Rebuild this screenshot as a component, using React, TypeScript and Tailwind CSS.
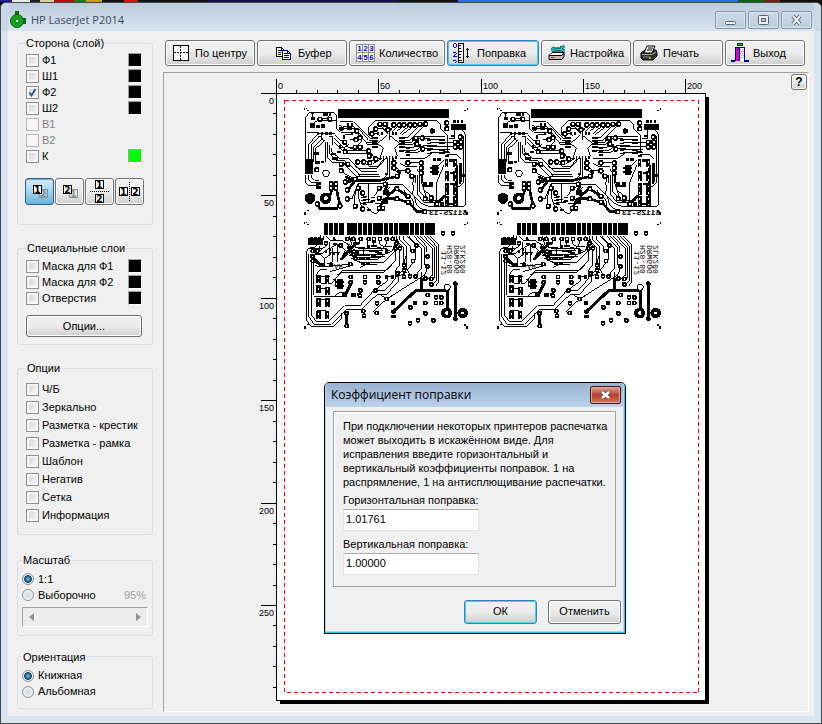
import type { ReactNode } from "react";

type Pt = [number, number];
type Box = [number, number, number, number];

function Ring({ at, r = 6 }: { at: Pt; r?: number }) {
  return <circle cx={at[0]} cy={at[1]} r={r} fill="white" stroke="black" strokeWidth="5" />;
}

function Rects({ items }: { items: Box[] }) {
  return (
    <g fill="black">
      {items.map(([x, y, w, h], i) => (
        <rect key={i} x={x} y={y} width={w} height={h} />
      ))}
    </g>
  );
}

const cornerMarks: Box[] = [
  [42, 0, 3, 6], [48, 0, 3, 3], [51, 5, 6, 5], [522, 5, 6, 5], [531, 0, 3, 6],
  [42, 312, 6, 9], [51, 306, 6, 4], [522, 306, 6, 5], [528, 312, 6, 9],
];

const upperTraces = [
  "M48 195V66L58 52H130L140 62V100L152 112H200L235 150H262",
  "M48 240V265L58 272H88M57 240V256L66 263H88M66 240V248L74 256H88",
  "M57 192V146L84 118M64 192V150L90 124M71 200V156L98 130M78 208V160L104 136",
  "M50 112H84M68 66V52H78M90 72H110L120 60M60 92L80 78H140",
  "M84 116H136M84 126H96M118 126H128V150M96 118V132L106 140V200",
  "M112 140V186L130 204H160L200 246H270M118 150V176L140 198H166L208 238H266M124 158V170L148 190H174L214 230H262",
  "M130 140L166 176H240L258 190H270M132 130L172 168H232L250 180M134 120L180 160H210",
  "M146 88L160 100H206L236 136H262M150 80H190L214 104L240 130H262M160 94H190L206 110V122L232 144H262M166 120H190",
  "M196 106L214 120V140L196 158H180M180 134H200M150 158H164L176 148",
  "M236 120V96L256 76H440L452 88V100L474 124V170H460",
  "M270 90L288 108M292 90V116M314 90L300 108V136M328 90L306 112M342 90L322 108M360 90L330 116M374 90L336 120M392 88L352 128H334M408 86L356 138H334",
  "M258 102H280L292 116M246 116H262L270 122",
  "M262 146L280 158M330 146L314 158M262 146L290 122M300 122L330 146M280 158L272 182M314 158L322 182",
  "M334 144H362L380 126H410M334 150H364L388 130H420M334 158H370L384 148M340 166H376L400 152H440M344 174H380L398 162H430M330 192H402L430 172H462",
  "M420 124H462M420 134H462M420 144H480M420 154H480M420 164H480M420 174H480",
  "M300 188V240L286 262M294 188V236L276 254H180M308 188V220L322 230M288 190L266 214H240L226 206M282 190L258 222H208L196 214M276 190L250 206",
  "M270 190L240 200H200M300 200V230M312 190V212L330 228H344L360 240",
  "M162 236L180 244L200 254H270M160 206H176L214 246",
  "M330 206L346 214H380M346 224L370 242V262M354 204H398M380 222L394 240V262L410 310",
  "M384 240V300L404 324H462M390 240V290L412 318H460M400 262V284L420 300V324",
  "M366 262L372 280L366 296L392 324L420 336H520L528 328V120L516 104",
  "M470 84V102M494 90V130M506 126H522V262L506 276H494M478 130H496M478 142H496M478 154H496",
  "M462 194L430 228V240M462 210L440 262V320M470 180L500 180L512 192",
  "M170 312H186L204 266H280L286 272M206 268V310L218 344M236 268V320M220 306H232M220 314H240M220 322H244L256 314M220 330H232M240 320H256",
  "M254 302L270 280L290 270H340L372 302L380 330L400 346H490M232 336L246 352L258 356L266 350L270 336",
  "M286 290L300 276M256 326H280L296 310M206 284L196 290L192 330M340 284L372 320V336",
];

const lowerTraces = [
  "M50 110L56 100H96M50 110V318L66 336H130L154 312V294M57 116V306L72 328H124L146 306L168 284H214L262 238H290L326 198V176L342 162",
  "M64 122V300L80 320H116L140 296L164 272H210L250 228H282L318 190V164L330 150V100L318 62",
  "M72 126V240M72 246H164M92 206H124L152 174H280L318 136V104",
  "M74 150L90 156L180 148M110 164H90L78 180M120 170L190 150M140 182L156 168H286L306 150",
  "M92 60V80L72 98H60M108 62L124 78H160L190 104M120 80V96L98 116H76M128 100V140L110 148M116 112H150M142 88V140",
  "M60 108H88L110 92M60 118H90L104 130V148M70 126L96 150M150 90L166 106L150 136M160 80L190 96",
  "M178 62L186 90L206 100H290M190 62L200 84M210 66V86M232 66V92M250 66V90L270 100M268 66V86L284 96H306M290 66V86L274 104M308 64L318 80L306 108L280 120H200",
  "M190 108H280M190 118H250L260 126H286M196 128H270L300 104M180 104V116L196 134H262L280 120M206 142H282L322 100M180 96L206 112M220 100V120M236 110H266M178 122H240M184 130L220 146",
  "M320 62V78L342 100V150M330 62V76L350 96V164L362 180M340 62V74L362 94V106M350 62L378 90V130L352 166M360 62V70L394 100V160L374 184M370 62L404 98V150L416 154",
  "M380 62L410 94V112M390 62L428 102V180L412 192M400 62L434 98V186L424 192M410 62L440 94V196L426 208M420 62L446 90V202L436 214M350 116L340 150M396 170V200",
  "M415 154L404 180L290 252L270 238M290 252L250 290M306 186L292 186V198L256 224V228M262 150H226L210 158",
  "M130 66L140 76M100 62V76M104 130L120 120V100L138 90M88 92V104M350 172L318 186",
  "M80 186H120M80 220H108M80 254H108M80 288H108M128 196L138 190V216M132 246L148 232H166",
];

const upperPads: Pt[] = [
  [470, 84], [470, 101], [270, 88], [286, 88], [312, 90], [328, 90], [342, 90], [360, 90], [374, 90], [390, 88], [407, 87],
  [257, 102], [246, 117], [294, 104], [200, 108], [198, 134], [164, 142], [210, 128], [196, 157], [211, 157], [90, 73], [119, 73],
  [236, 168], [238, 184], [257, 192], [166, 170], [203, 201], [221, 201], [239, 203], [154, 208], [173, 208], [154, 227],
  [312, 204], [312, 219], [354, 204], [394, 204], [394, 220], [354, 228], [366, 244], [394, 234], [80, 224], [378, 130], [397, 129],
  [380, 147], [398, 162], [124, 266], [137, 266], [124, 280], [137, 280], [166, 261], [196, 253], [172, 285], [205, 280],
  [218, 294], [172, 312], [196, 334], [218, 342], [268, 280], [286, 268], [268, 310], [320, 281], [320, 311], [354, 304],
  [355, 322], [406, 311], [424, 308], [404, 350], [82, 327], [150, 333], [496, 142], [511, 126], [496, 156], [512, 142],
  [512, 156], [440, 326], [322, 244], [268, 340], [278, 340],
];

const lowerPads: Pt[] = [
  [459, 55], [489, 55], [379, 91], [368, 108], [369, 138], [413, 124], [412, 154], [342, 151], [342, 166], [323, 175],
  [342, 185], [360, 184], [377, 184], [406, 191], [424, 192], [424, 208], [182, 186], [182, 202], [225, 186], [225, 202],
  [265, 186], [265, 202], [256, 227], [211, 226], [210, 242], [290, 252], [261, 265], [220, 288], [222, 302], [260, 294],
  [170, 295], [170, 333], [406, 264], [406, 295], [361, 277], [360, 325], [384, 316], [430, 316], [413, 240], [438, 247],
  [454, 247], [438, 264], [454, 264], [181, 147], [172, 72], [190, 72], [212, 72], [236, 72], [252, 72], [270, 72], [290, 72],
  [308, 72], [108, 85], [152, 91], [68, 108], [82, 108], [68, 124], [68, 138], [320, 85], [316, 100], [330, 100], [190, 118], [196, 130],
];

const upperBlocks: Box[] = [
  [144, 2, 333, 28], [45, 153, 24, 46], [60, 45, 16, 15], [92, 48, 14, 12], [78, 52, 12, 8], [116, 16, 8, 8], [62, 12, 10, 6],
  [80, 72, 8, 8], [92, 72, 8, 8], [106, 72, 8, 8], [118, 72, 8, 8], [100, 14, 14, 10], [62, 28, 14, 8],
  [148, 56, 14, 10], [170, 44, 8, 12], [182, 44, 6, 12], [170, 58, 16, 8], [72, 132, 14, 8], [76, 160, 14, 8], [94, 158, 8, 8],
  [78, 222, 8, 8], [88, 222, 6, 8], [78, 234, 8, 8], [88, 234, 6, 8], [124, 136, 14, 6], [126, 148, 18, 8],
  [140, 128, 14, 8], [146, 112, 8, 10], [158, 82, 8, 10], [182, 72, 6, 8], [190, 92, 8, 8], [180, 116, 10, 8],
  [246, 88, 18, 4], [246, 97, 18, 4], [246, 106, 18, 4], [246, 115, 18, 4], [262, 73, 6, 8], [272, 73, 6, 8], [306, 73, 6, 8], [316, 73, 6, 8],
  [328, 88, 16, 4], [328, 97, 16, 4], [328, 106, 16, 4], [328, 115, 16, 4], [270, 144, 4, 10], [279, 144, 4, 10], [288, 144, 4, 10],
  [297, 144, 4, 10], [306, 144, 4, 10], [316, 144, 4, 10], [328, 126, 14, 7], [348, 118, 12, 6], [348, 128, 12, 6], [348, 138, 12, 6],
  [366, 90, 8, 10], [380, 90, 8, 12], [384, 108, 8, 8], [412, 84, 12, 4], [412, 94, 12, 4], [412, 104, 12, 4], [412, 114, 12, 4], [412, 124, 12, 4], [412, 134, 12, 4],
  [448, 84, 16, 4], [448, 94, 16, 4], [448, 104, 16, 4], [448, 114, 16, 4], [448, 124, 16, 4], [448, 134, 16, 4], [464, 128, 12, 8], [464, 140, 12, 8],
  [484, 48, 44, 17], [489, 36, 8, 9], [501, 36, 7, 9], [512, 36, 8, 9], [484, 80, 12, 8],
  [428, 150, 10, 8], [442, 150, 10, 8], [425, 172, 18, 30], [420, 178, 28, 6], [420, 190, 28, 6],
  [320, 186, 8, 8], [324, 190, 10, 8], [285, 194, 8, 8], [374, 200, 4, 26], [380, 200, 4, 26], [392, 202, 6, 22],
  [464, 152, 11, 26], [464, 190, 13, 30], [464, 226, 13, 34], [464, 264, 13, 30], [490, 152, 11, 26], [490, 190, 13, 30],
  [490, 226, 13, 34], [490, 264, 13, 30], [478, 154, 10, 8], [480, 192, 10, 6], [480, 226, 10, 6], [478, 284, 10, 6],
  [402, 222, 10, 8], [416, 222, 12, 8], [402, 232, 26, 6], [420, 262, 10, 12], [420, 278, 10, 8], [438, 282, 10, 8], [450, 286, 12, 10],
  [280, 246, 16, 14], [278, 274, 16, 14], [240, 282, 10, 4], [212, 268, 16, 3], [212, 276, 16, 3], [212, 284, 16, 3], [242, 268, 14, 3], [242, 276, 14, 3],
  [262, 298, 10, 8], [276, 298, 10, 8], [232, 302, 10, 6], [342, 278, 8, 8], [508, 198, 5, 30], [516, 198, 8, 8],
];

const lowerBlocks: Box[] = [
  [102, 3, 12, 36], [117, 3, 12, 36], [132, 3, 12, 36], [147, 3, 14, 36], [171, 3, 30, 36], [204, 3, 12, 36], [219, 3, 12, 36],
  [234, 3, 12, 36], [249, 3, 29, 36], [281, 3, 12, 36], [296, 3, 12, 36], [311, 3, 12, 36], [327, 3, 30, 36], [360, 3, 12, 36],
  [375, 3, 11, 36], [389, 3, 12, 36], [404, 3, 31, 36], [54, 48, 45, 20], [60, 44, 8, 4], [72, 44, 8, 4], [84, 44, 10, 4],
  [128, 46, 8, 8], [130, 62, 10, 8], [90, 122, 14, 12], [116, 122, 14, 12], [98, 74, 8, 4], [116, 78, 6, 8], [104, 84, 8, 10],
  [116, 92, 6, 8], [128, 92, 6, 8], [142, 90, 6, 8], [190, 60, 18, 8], [196, 74, 28, 5], [230, 70, 10, 8], [244, 70, 16, 4],
  [170, 72, 12, 10], [176, 84, 14, 10], [196, 88, 10, 8], [206, 104, 18, 10], [228, 104, 12, 10], [242, 98, 16, 8], [262, 90, 14, 6],
  [214, 122, 10, 8], [228, 122, 12, 8], [246, 56, 12, 8], [264, 74, 10, 6], [284, 80, 10, 12], [256, 84, 8, 8],
  [285, 160, 9, 10], [302, 160, 9, 10], [140, 172, 18, 28], [136, 176, 26, 6], [136, 190, 26, 6],
  [78, 160, 14, 24], [106, 160, 12, 24], [78, 190, 14, 24], [106, 194, 14, 24], [78, 228, 14, 28], [106, 228, 14, 28],
  [78, 266, 14, 26], [106, 266, 12, 26], [156, 214, 14, 12], [184, 214, 14, 12], [200, 214, 12, 8], [304, 238, 12, 10], [368, 238, 12, 10],
  [304, 266, 14, 8], [304, 280, 14, 8], [250, 202, 14, 8], [302, 222, 4, 4],
];

function Board() {
  return (
    <g fill="none" stroke="black" strokeWidth="3">
      <g>
        {upperTraces.map((d) => <path key={d} d={d} />)}
        <path
          strokeWidth="8"
          d="M110 325L128 280V268M140 286L146 312L150 330M78 326L90 340H144M166 245L190 256H270L322 244M166 262L196 256L174 284M286 310L316 311L356 322L382 350H404M290 304L320 281L354 304M290 272L282 300M440 326L468 300M268 338L284 310M500 210V320M512 204V260"
        />
        <g transform="translate(0 39)" stroke="none">
          <Rects items={upperBlocks} />
          <Rects items={cornerMarks} />
        </g>
        {upperPads.map((p, i) => <Ring key={i} at={p} />)}
        <circle cx="108" cy="235" r="10" fill="white" />
        <circle cx="60" cy="310" r="15" fill="black" />
        <circle cx="107" cy="310" r="12" fill="white" strokeWidth="11" />
        <circle cx="427" cy="108" r="7" fill="black" />
        <circle cx="154" cy="102" r="5" fill="black" />
        <g fill="white" stroke="none">
          {[198, 214, 234, 252, 272, 292, 310, 326].map((y) => (
            <path key={y} d={`M468 ${y}h4v5h-4zM494 ${y}h4v5h-4z`} />
          ))}
        </g>
        <text x="-532" y="359" transform="scale(-1 1)" fill="black" stroke="none" className="font-['Liberation_Mono'] text-[24px] font-bold">6112S-13</text>
      </g>
      <g transform="translate(0 360)">
        {lowerTraces.map((d) => <path key={d} d={d} />)}
        <path
          strokeWidth="9"
          d="M310 290L378 226H472V280M396 190V226M496 206V310M170 296V332M184 204L166 240M72 134L92 150M152 134L180 104L196 88"
        />
        <g transform="translate(0 21)" stroke="none">
          <Rects items={lowerBlocks} />
          <Rects items={cornerMarks} />
        </g>
        {lowerPads.map((p, i) => <Ring key={i} at={p} r={5} />)}
        <circle cx="472" cy="217" r="9" fill="white" />
        <circle cx="470" cy="294" r="11" fill="white" strokeWidth="11" />
        <circle cx="518" cy="294" r="10" fill="white" strokeWidth="12" />
        <g fill="black">
          <circle cx="496" cy="206" r="6" />
          <circle cx="496" cy="311" r="6" />
          <circle cx="310" cy="291" r="6" />
        </g>
        <g fill="white" stroke="none">
          {[188, 202, 220, 234, 256, 272, 294, 308].map((y) => (
            <path key={y} d={`M84 ${y}h4v5h-4zM111 ${y}h4v5h-4z`} />
          ))}
        </g>
        <g fill="black" stroke="none" className="font-['Liberation_Mono']">
          <text x="132" y="163" className="text-[22px]">VH</text>
          <g transform="matrix(0 1 1 0 0 0)" className="text-[24px]">
            <text x="108" y="467">11-12</text>
            <text x="90" y="487">H28-80</text>
            <text x="90" y="507">DRWGQG</text>
            <text x="90" y="526">2LK200</text>
          </g>
        </g>
      </g>
    </g>
  );
}

function PaperPreview() {
  const tens = Array.from({ length: 21 }, (_, i) => i);
  const rows = Array.from({ length: 30 }, (_, i) => i);
  return (
    <svg
      viewBox="256 78 460 630"
      width="460"
      height="630"
      shapeRendering="crispEdges"
      role="img"
      aria-label="Предпросмотр печати"
      className="font-['Liberation_Sans',sans-serif] text-[9px]"
    >
      <path d="M280 97H709V704H280Z" />
      <path d="M276 93H706V701H276Z" />
      <path d="M277 94H705V700H277Z" fill="white" />
      <path d="M261 93h16v1h-16zM276 79h1v15h-1z" />
      {tens.map((i) => {
        const x = 276 + Math.round(i * 20.45);
        const major = i % 5 === 0;
        return (
          <g key={i}>
            <rect x={x} y={major ? 79 : 90} width="1" height={major ? 14 : 3} />
            {major && <text x={x + 2} y="89">{i * 10}</text>}
          </g>
        );
      })}
      {rows.map((i) => {
        const y = 93 + Math.round(i * 20.48);
        const major = i % 5 === 0;
        return (
          <g key={i}>
            <rect x={major ? 261 : 273} y={y} width={major ? 15 : 3} height="1" />
            {major && <text x="274" y={y + 11} textAnchor="end">{i * 10}</text>}
          </g>
        );
      })}
      <rect x="284.5" y="100.5" width="414" height="592" fill="none" stroke="#ff0000" strokeDasharray="4 3" />
      <g transform="translate(290 95) scale(0.33333)"><Board /></g>
      <g transform="translate(483 95) scale(0.33333)"><Board /></g>
    </svg>
  );
}

function CheckRow({ label, checked, disabled, swatch, tall }: { label: string; checked?: boolean; disabled?: boolean; swatch?: "black" | "lime"; tall?: boolean }) {
  return (
    <div className={`flex items-center justify-between ${tall ? "h-[18px]" : "h-4"}`}>
      <label className={`flex items-center gap-[3px] whitespace-nowrap ${disabled ? "text-[#838383]" : ""}`}>
        <span className="relative flex">
          <input
            type="checkbox"
            defaultChecked={checked}
            disabled={disabled}
            className="peer size-[13px] appearance-none border border-[#8e8f8f] bg-linear-to-br from-[#cfd3d9] to-[#f8f8f8] shadow-[inset_0_0_0_2px_#f6f6f6] disabled:border-[#b8b8b8] disabled:from-[#f6f6f6]"
          />
          <svg viewBox="0 0 13 13" className="pointer-events-none absolute inset-0 hidden size-[13px] peer-checked:block">
            <path d="M3.5 6.5L5.5 9.5L9.5 3" fill="none" stroke="#3f51a0" strokeWidth="2" />
          </svg>
        </span>
        {label}
      </label>
      {swatch && (
        <span className={`size-[14px] border border-t-[#a0a0a0] border-r-white border-b-white border-l-[#a0a0a0] ${swatch === "lime" ? "bg-[#00ff00]" : "bg-black"}`} />
      )}
    </div>
  );
}

function RadioRow({ name, label, checked }: { name: string; label: string; checked?: boolean }) {
  return (
    <label className="flex h-4 items-center gap-1 whitespace-nowrap">
      <input
        type="radio"
        name={name}
        defaultChecked={checked}
        className="size-3 appearance-none rounded-full border border-[#8e8f8f] bg-radial from-[#d4d8de] to-[#f8f8f8] shadow-[inset_0_0_0_1px_#f4f4f4] checked:bg-radial checked:from-[#4fb8e8] checked:from-10% checked:via-[#123a5c] checked:via-50% checked:to-[#dfe6ec] checked:to-60%"
      />
      {label}
    </label>
  );
}

function Group({ title, className, children }: { title: string; className: string; children: ReactNode }) {
  return (
    <fieldset className={`min-w-0 rounded-[3px] border border-[#d5dfe5] ${className}`}>
      <legend className="px-px leading-[14px]">{title}</legend>
      {children}
    </fieldset>
  );
}

const face = "rounded-[3px] border border-[#707070] bg-linear-to-b from-[#f2f2f2] from-0% via-[#ebebeb] via-50% to-[#cfcfcf] shadow-[inset_0_0_0_1px_#fcfcfc]";
const focused = "rounded-[3px] border border-[#3c7fb1] bg-linear-to-b from-[#f2f2f2] from-0% via-[#ebebeb] via-50% to-[#cfcfcf] shadow-[inset_0_0_0_1px_#48d0f4]";

function ToolButton({ label, width, icon, active }: { label: string; width: string; icon: ReactNode; active?: boolean }) {
  return (
    <button type="button" className={`flex h-[26px] shrink-0 items-center whitespace-nowrap ${width} ${active ? focused : face}`}>
      {icon}
      {label}
    </button>
  );
}

function CenterIcon() {
  return (
    <svg width="16" height="16" className="mr-1.5 ml-[7px]" shapeRendering="crispEdges">
      <rect x="0.5" y="0.5" width="15" height="15" fill="white" stroke="black" />
      <path d="M7.5 1V15M1 7.5H15" stroke="black" strokeDasharray="2 1" />
    </svg>
  );
}

function CopyIcon() {
  return (
    <svg width="17" height="15" className="mr-1.5 ml-[17px]" shapeRendering="crispEdges">
      <path d="M1.5 1.5H6.5L9.5 4.5V10.5H1.5Z" fill="white" stroke="black" />
      <path d="M3 4.5H6M3 6.5H6M3 8.5H6M6.5 2V4.5H9" fill="none" stroke="black" />
      <path d="M7.5 4.5H12.5L15.5 7.5V13.5H7.5Z" fill="white" stroke="#000080" />
      <path d="M9 7.5H12M9 9.5H14M9 11.5H14M12.5 5V7.5H15" fill="none" stroke="#000080" />
    </svg>
  );
}

function CountIcon() {
  return (
    <svg width="19" height="18" className="mr-1 ml-1.5" shapeRendering="crispEdges">
      <path d="M0.5 0.5H18.5V17.5H0.5ZM6.5 0V18M12.5 0V18M0 8.5H19" fill="white" stroke="#909090" />
      <g fill="#0000e0" textAnchor="middle" className="font-['Liberation_Sans',sans-serif] text-[8px] font-bold">
        <text x="3.5" y="7">1</text><text x="9.5" y="7">2</text><text x="15.5" y="7">3</text>
        <text x="3.5" y="16">4</text><text x="9.5" y="16">5</text><text x="15.5" y="16">6</text>
      </g>
    </svg>
  );
}

function RulerIcon() {
  return (
    <svg width="18" height="20" className="mr-1.5 ml-[5px]" shapeRendering="crispEdges">
      <g fill="none" stroke="#0000e0">
        <path d="M1 0.5H3M0.5 1V4M3.5 1V4M1 4.5H3" />
        <path d="M0 9.5H3M3.5 10V11M2 11.5H3M1 12.5H2M0 13.5H4M0 17.5H3M3.5 18V19M2 19.5H3" />
      </g>
      <rect x="5.5" y="0.5" width="5" height="19" fill="white" stroke="black" />
      <path d="M6 2.5H8M6 5.5H8M6 8.5H9M6 11.5H8M6 14.5H8M6 17.5H9" stroke="black" />
      <path d="M14.5 5V15M13 6.5H16M13 13.5H16" stroke="black" />
    </svg>
  );
}

function SettingsIcon() {
  return (
    <svg width="18" height="16" className="mr-1 ml-1.5">
      <path d="M1 10.5L4 7.5H16L14 10.5Z" fill="white" stroke="black" />
      <path d="M1 10.5H14L16 7.5V11.5L14 14.5H1Z" fill="#c0c0c0" stroke="black" />
      <path d="M3 12.5H7" stroke="#ff2020" />
      <path d="M5 4.5H13" stroke="black" strokeWidth="4" />
      <path d="M4 2.5L6 4.5L3.5 6M6 4.5H13M16.5 1.5L13.5 2.5V5L16.5 6" fill="none" stroke="#004848" strokeWidth="3" />
      <path d="M4 2.5L6 4.5L3.5 6M6 4.5H13M16.5 1.5L13.5 2.5V5L16.5 6" fill="none" stroke="#20c8c8" strokeWidth="1.6" />
    </svg>
  );
}

function PrintIcon() {
  return (
    <svg width="18" height="16" className="mr-[5px] ml-1.5">
      <path d="M1 8L5 5H16L17 8V11L13 15H3L1 13Z" fill="#303030" stroke="black" />
      <path d="M4 8L7 1H15L12 8Z" fill="white" stroke="black" />
      <path d="M8 3H13M7 5H12" stroke="black" />
      <path d="M2 9.5H12L16 7" fill="none" stroke="#a8a8a8" />
      <path d="M3 12H10" stroke="#808080" />
      <path d="M9 13H11" stroke="#e0d000" strokeWidth="1.5" />
    </svg>
  );
}

function ExitIcon() {
  return (
    <svg width="18" height="20" className="mr-1 ml-[5px]" shapeRendering="crispEdges">
      <rect x="6.5" y="0.5" width="5" height="2" fill="#20e020" stroke="#003000" />
      <path d="M0 17.5H4M13 17.5H18" stroke="#000080" strokeWidth="2" />
      <path d="M4 4H14V18H4Z" fill="#000080" />
      <path d="M9 5H13V18H9Z" fill="white" />
      <path d="M5 5L8 6V18H5Z" fill="#e000c0" />
      <path d="M9 6h1v1h-1zM11 6h1v1h-1zM10 8h1v1h-1zM12 8h1v1h-1zM9 10h1v1h-1zM11 10h1v1h-1zM10 12h1v1h-1zM12 12h1v1h-1zM9 14h1v1h-1zM11 14h1v1h-1z" fill="#20d0ff" />
    </svg>
  );
}

function Tile({ x, y, n, muted }: { x: number; y: number; n: string; muted?: boolean }) {
  const color = muted ? "#8a8f94" : "#000";
  return (
    <g>
      <rect x={x + 0.5} y={y + 0.5} width="8" height="8" fill={muted ? "none" : "white"} stroke={color} />
      <text x={x + 4.5} y={y + 7.5} textAnchor="middle" fill={color}>{n}</text>
    </g>
  );
}

function LayoutButton({ label, active, children }: { label: string; active?: boolean; children: ReactNode }) {
  return (
    <button
      type="button"
      aria-label={label}
      className={`flex h-[27px] w-[29px] shrink-0 items-center justify-center ${active ? "rounded-[3px] border border-[#2c628b] bg-linear-to-b from-[#d5ebf8] from-0% via-[#a9d9f2] via-45% to-[#66b2dc] shadow-[inset_0_1px_1px_#7da7c2]" : face}`}
    >
      <svg width="23" height="23" shapeRendering="crispEdges" className="shrink-0 font-['DejaVu_Sans',sans-serif] text-[9px] font-bold">
        {children}
      </svg>
    </button>
  );
}

function CaptionButton({ label, children }: { label: string; children: ReactNode }) {
  return (
    <button type="button" aria-label={label} className="flex h-[18px] w-[31px] items-center justify-center rounded-[2px] border border-[#8694a6] bg-linear-to-b from-[#ccd9e7] to-[#bdcddd] shadow-[inset_0_0_0_1px_#dce7f2]">
      <svg width="15" height="12">{children}</svg>
    </button>
  );
}

function CorrectionField({ id, label, value }: { id: string; label: string; value: string }) {
  return (
    <div className="flex flex-col">
      <label htmlFor={id} className="leading-[18px]">{label}</label>
      <input id={id} type="text" defaultValue={value} className="h-[22px] w-[136px] border border-[#e2e3ea] border-t-[#abadb3] bg-white px-0.5 pb-0.5" />
    </div>
  );
}

function CorrectionDialog() {
  return (
    <section role="dialog" aria-labelledby="dialog-title" className="absolute top-[382px] left-[324px] w-[302px] rounded-t-[5px] border border-black bg-[#f0f0f0]">
      <div className="rounded-t-[4px] border-r border-b border-[#35c4e4]">
        <div className="rounded-t-[4px] border-x border-b border-[#b9d1ea]">
          <header className="flex h-6 items-center justify-between rounded-t-[3px] bg-linear-to-b from-[#97b2d0] to-[#bcd3ec] pr-0.5 pl-[5px]">
            <h2 id="dialog-title" className="font-['Open_Sans',sans-serif] text-[12px]">Коэффициент поправки</h2>
            <button type="button" aria-label="Закрыть" className="flex h-[18px] w-[31px] items-center justify-center rounded-[2px] border border-[#47141c] bg-linear-to-b from-[#dba59c] from-0% via-[#b83c24] via-50% to-[#cf7a62] shadow-[inset_0_0_0_1px_#e0a79d]">
              <svg width="13" height="10">
                <path d="M3 2L10 8M10 2L3 8" stroke="#5b4a55" strokeWidth="4" />
                <path d="M3 2L10 8M10 2L3 8" stroke="white" strokeWidth="2.4" />
              </svg>
            </button>
          </header>
          <div className="px-[7px] pt-1">
            <div className="flex flex-col border border-[#a0a0a0] px-[9px] pt-[7px] pb-[11px] shadow-[inset_1px_1px_0_#fff]">
              <p className="mb-0.5 leading-[14px] whitespace-nowrap">
                При подключении некоторых принтеров распечатка<br />
                может выходить в искажённом виде. Для<br />
                исправления введите горизонтальный и<br />
                вертикальный коэффициенты поправок. 1 на<br />
                распрямление, 1 на антисплющивание распечатки.
              </p>
              <div className="flex flex-col gap-1">
                <CorrectionField id="horizontal" label="Горизонтальная поправка:" value="1.01761" />
                <CorrectionField id="vertical" label="Вертикальная поправка:" value="1.00000" />
              </div>
            </div>
          </div>
          <footer className="flex justify-end gap-[11px] pt-[13px] pr-0.5 pb-[7px]">
            <button type="button" className={`h-6 w-[73px] pb-0.5 ${focused}`}>ОК</button>
            <button type="button" className={`h-6 w-[73px] pb-0.5 ${face}`}>Отменить</button>
          </footer>
        </div>
      </div>
    </section>
  );
}

function DesktopStrip() {
  const cells: [string, number][] = [
    ["#1d1d8c", 12], ["#e8e8e8", 18], ["#202020", 10], ["#d8d0a0", 14], ["#b01010", 20], ["#108010", 12], ["#c8a000", 16], ["#101010", 22],
    ["#e01010", 14], ["#101010", 70], ["#12124a", 190], ["#101010", 60], ["#2f6fe8", 280], ["#106010", 26], ["#702010", 16], ["#101010", 42],
  ];
  return (
    <div className="flex h-0.5 overflow-hidden bg-black">
      {cells.map(([color, grow], i) => (
        <span key={i} style={{ background: color, flexGrow: grow }} />
      ))}
    </div>
  );
}

export default function App() {
  return (
    <div className="relative flex h-screen min-h-[724px] flex-col overflow-hidden bg-black font-['Liberation_Sans',Arial,sans-serif] text-[11px] text-black">
      <DesktopStrip />
      <div className="flex flex-1 flex-col rounded-t-[6px] border border-[#45494e] bg-[#d7e4f2] px-[7px] pb-[7px]">
        <header className="flex h-7 items-center justify-between rounded-t-[5px] bg-linear-to-b from-[#bccbdc] to-[#d7e4f2] shadow-[-7px_0_0_#cad8e7,7px_0_0_#cad8e7]">
          <div className="flex items-center gap-1 pt-1.5 pl-0.5">
            <svg width="17" height="18">
              <path d="M5 0H9V4H5ZM11 7H16V13H11Z" fill="#0a6a10" />
              <circle cx="7" cy="10" r="6.5" fill="#12a31b" stroke="#075c0b" />
              <circle cx="7" cy="10" r="2" fill="#d4f0d0" stroke="#075c0b" />
            </svg>
            <h1 className="font-['Open_Sans',sans-serif] text-[11px] text-[#3f4a56]">HP LaserJet P2014</h1>
          </div>
          <div className="flex gap-0.5 pt-1.5 pr-0.5">
            <CaptionButton label="Свернуть"><rect x="2.5" y="7.5" width="10" height="3" rx="1" fill="#eef1f4" stroke="#566270" /></CaptionButton>
            <CaptionButton label="Развернуть">
              <rect x="2.5" y="1.5" width="10" height="9" rx="1" fill="#eef1f4" stroke="#566270" />
              <rect x="5.5" y="4.5" width="4" height="3" fill="#b8c8d8" stroke="#566270" />
            </CaptionButton>
            <CaptionButton label="Закрыть">
              <path d="M4 2L11 10M11 2L4 10" stroke="#566270" strokeWidth="4" />
              <path d="M4 2L11 10M11 2L4 10" stroke="#eef1f4" strokeWidth="2" />
            </CaptionButton>
          </div>
        </header>
        <div className="flex flex-1 gap-2.5 bg-[#f0f0f0] pt-[5px] pr-[5px] pb-1 pl-[9px]">
          <aside className="flex w-[136px] shrink-0 flex-col">
            <Group title="Сторона (слой)" className="pt-0.5 pr-2.5 pb-[19px] pl-[7px]">
              <div className="pl-px">
                <CheckRow label="Ф1" swatch="black" />
                <CheckRow label="Ш1" swatch="black" />
                <CheckRow label="Ф2" checked swatch="black" />
                <CheckRow label="Ш2" swatch="black" />
                <CheckRow label="В1" disabled />
                <CheckRow label="В2" disabled />
                <CheckRow label="К" swatch="lime" />
              </div>
              <div className="mt-3.5 flex gap-px">
                <LayoutButton label="Первая сторона спереди" active>
                  <Tile x={11} y={9} n="2" muted /><Tile x={5} y={5} n="1" />
                </LayoutButton>
                <LayoutButton label="Вторая сторона спереди">
                  <Tile x={11} y={9} n="1" muted /><Tile x={5} y={5} n="2" />
                </LayoutButton>
                <LayoutButton label="По вертикали">
                  <Tile x={7} y={0} n="1" /><path d="M2 11.5H22" stroke="black" strokeDasharray="1 1" /><Tile x={7} y={14} n="2" />
                </LayoutButton>
                <LayoutButton label="По горизонтали">
                  <Tile x={1} y={7} n="1" /><path d="M11.5 2V22" stroke="black" strokeDasharray="1 1" /><Tile x={13} y={7} n="2" />
                </LayoutButton>
              </div>
            </Group>
            <Group title="Специальные слои" className="mt-4 pt-[3px] pr-2.5 pb-[7px] pl-2">
              <CheckRow label="Маска для Ф1" swatch="black" />
              <CheckRow label="Маска для Ф2" swatch="black" />
              <CheckRow label="Отверстия" swatch="black" />
              <button type="button" className={`mt-[9px] h-[22px] w-full ${face}`}>Опции...</button>
            </Group>
            <Group title="Опции" className="mt-4 pt-[5px] pr-2 pb-2.5 pl-2">
              <CheckRow tall label="Ч/Б" />
              <CheckRow tall label="Зеркально" />
              <CheckRow tall label="Разметка - крестик" />
              <CheckRow tall label="Разметка - рамка" />
              <CheckRow tall label="Шаблон" />
              <CheckRow tall label="Негатив" />
              <CheckRow tall label="Сетка" />
              <CheckRow tall label="Информация" />
            </Group>
            <Group title="Масштаб" className="mt-[18px] px-1 pt-1 pb-2">
              <RadioRow name="scale" label="1:1" checked />
              <div className="flex items-center justify-between pr-0.5">
                <RadioRow name="scale" label="Выборочно" />
                <output className="text-[#a0a0a0]">95%</output>
              </div>
              <div className="mt-[3px] flex h-5 items-center justify-between border border-t-[#a0a0a0] border-r-white border-b-white border-l-[#a0a0a0] bg-[#ececec] px-1.5">
                <button type="button" disabled aria-label="Уменьшить масштаб" className="flex"><svg width="5" height="8"><path d="M5 0V8L0 4Z" fill="#909090" /></svg></button>
                <button type="button" disabled aria-label="Увеличить масштаб" className="flex"><svg width="5" height="8"><path d="M0 0V8L5 4Z" fill="#909090" /></svg></button>
              </div>
            </Group>
            <Group title="Ориентация" className="mt-3.5 px-1 pt-1 pb-2">
              <RadioRow name="orientation" label="Книжная" checked />
              <RadioRow name="orientation" label="Альбомная" />
            </Group>
          </aside>
          <main className="flex min-w-0 flex-1 flex-col">
            <nav className="flex gap-0.5 pt-1 pb-1.5 pl-0.5">
              <ToolButton label="По центру" width="w-[90px]" icon={<CenterIcon />} />
              <ToolButton label="Буфер" width="w-[90px]" icon={<CopyIcon />} />
              <ToolButton label="Количество" width="w-[96px]" icon={<CountIcon />} />
              <ToolButton label="Поправка" width="w-[92px]" icon={<RulerIcon />} active />
              <ToolButton label="Настройка" width="w-[90px]" icon={<SettingsIcon />} />
              <ToolButton label="Печать" width="w-[90px]" icon={<PrintIcon />} />
              <ToolButton label="Выход" width="w-[80px]" icon={<ExitIcon />} />
            </nav>
            <div className="relative flex flex-1 justify-center border border-t-[#a0a0a0] border-r-white border-b-white border-l-[#a0a0a0] pt-[5px]">
              <PaperPreview />
              <button type="button" aria-label="Справка" className={`absolute top-px right-px size-4 text-[12px] leading-3 font-bold ${face}`}>?</button>
            </div>
          </main>
        </div>
      </div>
      <CorrectionDialog />
    </div>
  );
}
